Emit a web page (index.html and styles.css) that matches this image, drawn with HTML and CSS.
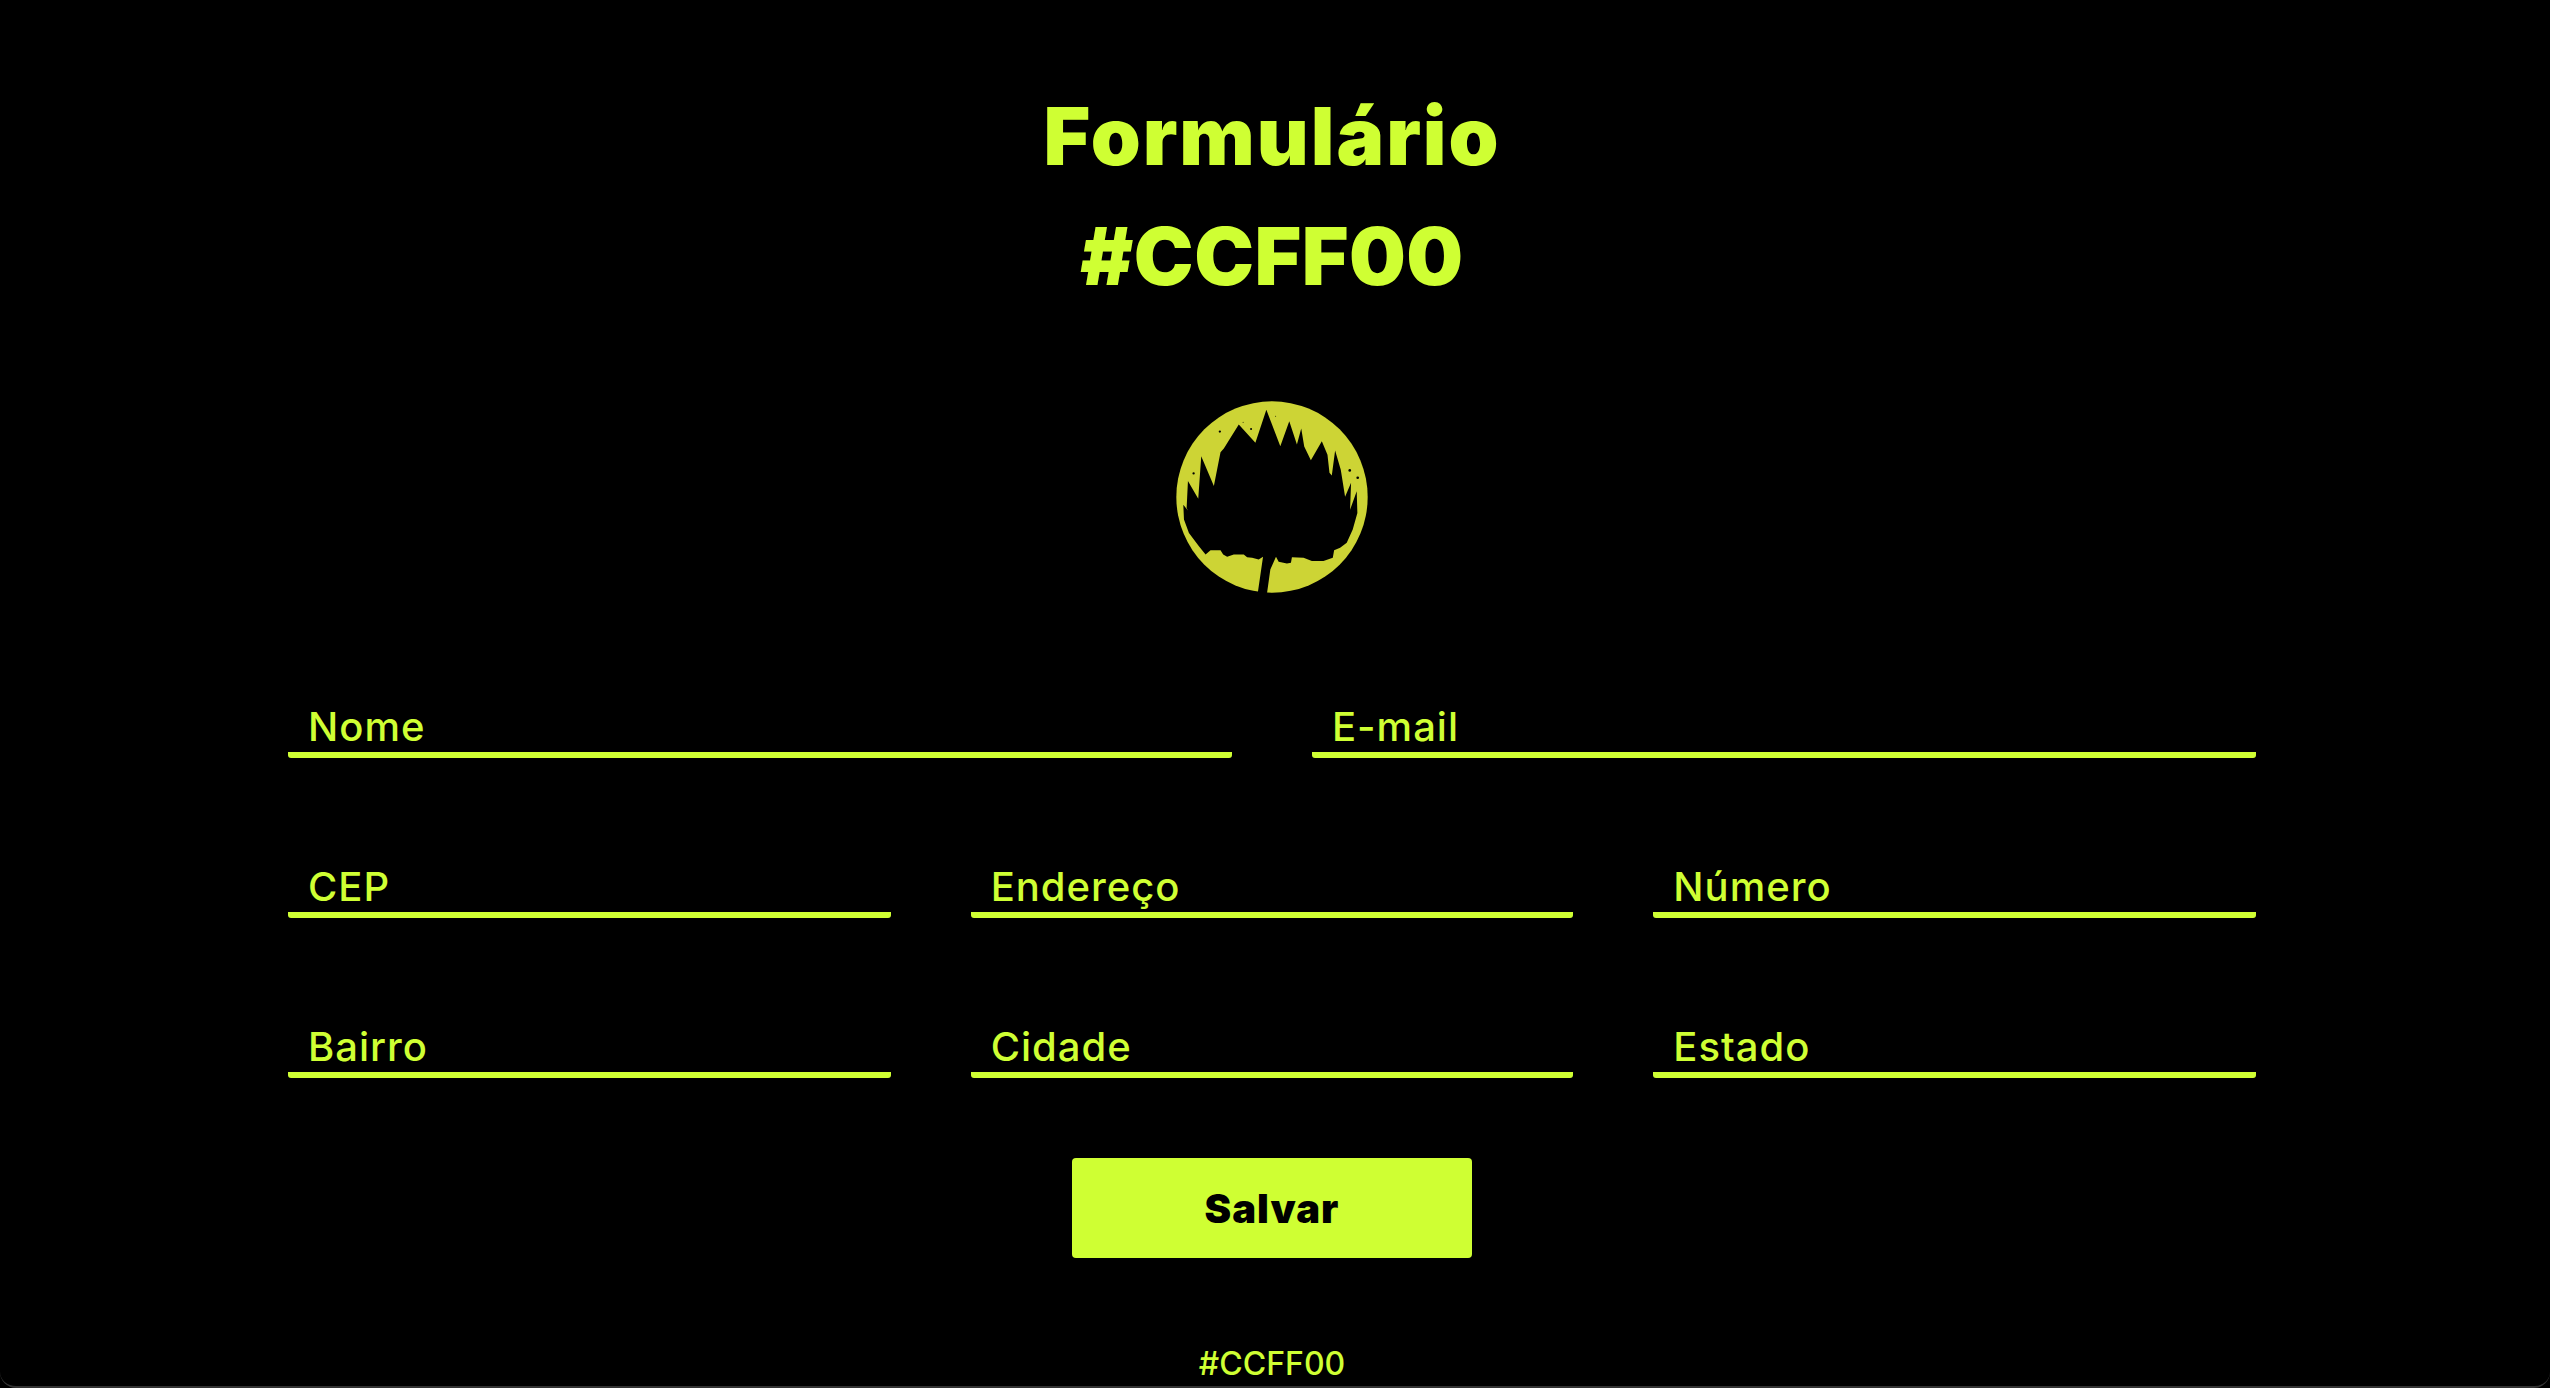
FILE: index.html
```html
<!DOCTYPE html>
<html lang="pt-BR">
<head>
<meta charset="utf-8">
<title>Formulário #CCFF00</title>
<link rel="stylesheet" href="styles.css">
</head>
<body>
<main class="page">
  <header class="heading">
    <h1 class="title title-name">Formulário</h1>
    <h1 class="title title-hex">#CCFF00</h1>
  </header>
  <div class="logo-wrap">
    <svg class="logo" viewBox="130 60 590 590" aria-hidden="true">
      <circle cx="425" cy="352" r="288" fill="#cdd435"/>
      <path fill="#000" d="M172 304 L168 385 L172 393 L158 375 L160 420 L175 460 L205 500 L225 525 L240 512 L270 512 L278 525 L290 532 L310 525 L340 525 L350 533 L365 535 L385 540 L398 532 L382 642 L410 642 L420 570 L437 532 L445 547 L470 552 L482 550 L485 533 L520 535 L545 545 L580 545 L608 535 L612 512 L630 505 L650 490 L668 450 L682 400 L680 335 L660 390 L663 309 L645 351 L632 270 L615 212 L605 287 L598 279 L592 225 L575 184 L542 241 L522 200 L513 146 L500 194 L477 124 L450 199 L408 89 L375 189 L325 134 L280 206 L270 217 L250 319 L212 229 L203 357 Z"/>
      <g fill="#000">
        <circle cx="268" cy="155" r="3.5"/>
        <circle cx="189" cy="281" r="3.5"/>
        <circle cx="362" cy="147" r="3"/>
        <circle cx="659" cy="272" r="4"/>
        <circle cx="683" cy="294" r="4"/>
        <circle cx="338" cy="127" r="1.5"/>
        <circle cx="436" cy="109" r="1.5"/>
      </g>
    </svg>
  </div>
  <form class="form">
    <div class="row row-2">
      <div class="field">Nome</div>
      <div class="field">E-mail</div>
    </div>
    <div class="row row-3">
      <div class="field">CEP</div>
      <div class="field">Endereço</div>
      <div class="field">Número</div>
    </div>
    <div class="row row-3">
      <div class="field">Bairro</div>
      <div class="field">Cidade</div>
      <div class="field">Estado</div>
    </div>
    <div class="actions">
      <button class="save" type="button">Salvar</button>
    </div>
  </form>
  <p class="hex">#CCFF00</p>
</main>
</body>
</html>
```
FILE: styles.css
```css
* { box-sizing: border-box; }
html, body { margin: 0; height: 100%; background: #000; }
body { font-family: Inter, "Noto Sans", sans-serif; color: #cfff33; overflow: hidden; }
.page {
  height: 1388px;
  display: flex;
  flex-direction: column;
  align-items: center;
  padding: 76px 6px 0 0;
  border-bottom: 2px solid #333;
  border-radius: 0 0 16px 16px;
}
.heading { text-align: center; }
.title { margin: 0; font-size: 80px; line-height: 120px; font-weight: 900; }
.title-name { letter-spacing: 2px; }
.title-hex { letter-spacing: 0.5px; }
.logo-wrap { margin-top: 84px; height: 194px; }
.logo { display: block; width: 196px; height: 196px; }
.form { width: 1968px; margin-top: 104px; }
.row { display: grid; gap: 80px; margin-bottom: 100px; }
.row-2 { grid-template-columns: repeat(2, 1fr); }
.row-3 { grid-template-columns: repeat(3, 1fr); }
.field {
  height: 60px;
  padding-left: 20px;
  font-size: 40px;
  font-weight: 500;
  letter-spacing: 1px;
  line-height: 57px;
  border-bottom: 6px solid #cfff33;
  border-radius: 3px;
}
.actions { display: flex; justify-content: center; margin-top: -20px; }
.save {
  width: 400px;
  height: 100px;
  background: #cfff33;
  color: #000;
  border: 0;
  border-radius: 4px;
  font-family: inherit;
  font-size: 40px;
  letter-spacing: 1px;
  font-weight: 900;
}
.hex { margin: 82px 0 0; font-size: 32px; font-weight: 500; line-height: 48px; }
```
